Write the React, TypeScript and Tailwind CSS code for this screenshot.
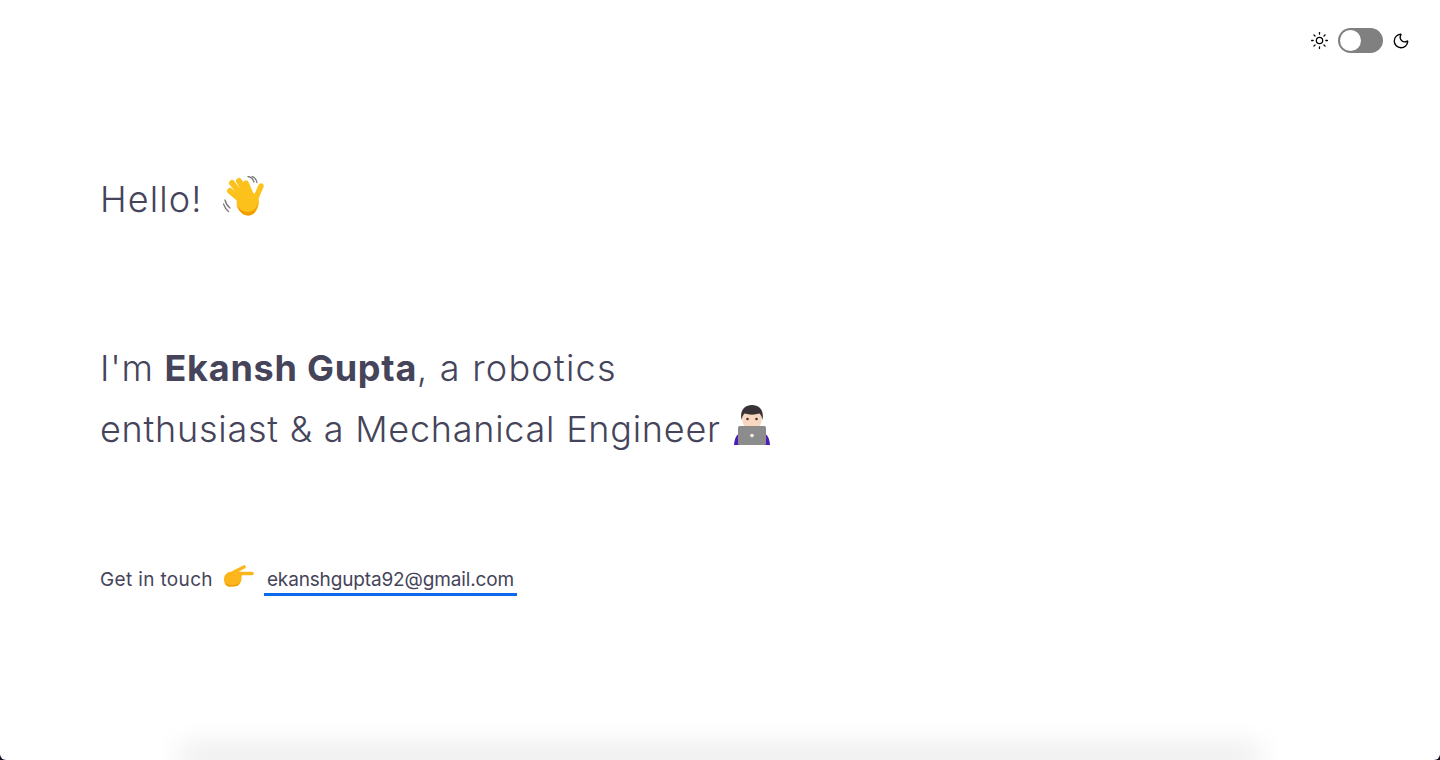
import { Moon, Sun } from "lucide-react";

function WaveEmoji() {
  return (
    <svg width="44" height="44" viewBox="0 0 44 44" fill="none">
      <path d="M2 24c.8 3.500 2.500 6 5 8M.5 28c1 3 2.500 5.500 5 7.500" stroke="#777" strokeWidth="1.300" strokeLinecap="round" />
      <path d="M25 .5c3 .5 5 2.500 6 5.500M29 .5c2.500 1 4.500 3 5 6" stroke="#777" strokeWidth="1.300" strokeLinecap="round" />
      <g stroke="#fcc21b" strokeLinecap="round">
        <path d="M7 15l12 10" strokeWidth="6" />
        <path d="M9 7l12 15" strokeWidth="6" />
        <path d="M16 5l9 15" strokeWidth="6" />
        <path d="M23 7l6 14" strokeWidth="5.500" />
        <path d="M38 10l-6 14" strokeWidth="5.500" />
      </g>
      <path d="M14 24c2-5 10-9 16-7 4 1 6 5 6 9-.3 7-4 13-10 13.500-5 .3-9-3-11-8-1-2.500-2-5-1-7.500z" fill="#fcc21b" />
      <path d="M13 28c3 5 7 8 12 8 5-.5 8-3.500 10-9-1 7-4 12-9.500 12.500-5.500.3-10-4.500-12.500-11.500z" fill="#f19d00" />
    </svg>
  );
}

function PointEmoji() {
  return (
    <svg width="32" height="26" viewBox="0 0 32 26" fill="none">
      <path d="M16 9.500h13" stroke="#fcb61b" strokeWidth="3.600" strokeLinecap="round" />
      <path d="M11 8l10-5" stroke="#fcb61b" strokeWidth="3.600" strokeLinecap="round" />
      <path d="M1 15c0-4 3-7 8-7.500 3-.3 6-.3 9 .5 1.500 1 1.500 3 .5 4.500.5 3-.5 6-2 7.500-1.500 1.800-4 2.500-7 2.500H6c-3.500 0-5-3.500-5-7.500z" fill="#fcb61b" />
      <path d="M3 19c2 2 5 2.500 8 2 3-.3 5-1.500 6-3-.5 3-3 4.500-7 4.500H6c-1.500 0-2.500-1.500-3-3.500z" fill="#ee9a0b" />
    </svg>
  );
}

function LaptopEmoji() {
  return (
    <svg width="36" height="40" viewBox="0 0 36 40" fill="none">
      <path d="M0 40c.5-6 2-10 6-12h24c4 2 5.500 6 6 12z" fill="#4a1fb8" />
      <ellipse cx="18" cy="13" rx="10" ry="12" fill="#f7d7bd" />
      <path d="M7.500 15C5.500 5 11 0 18 0s12.500 5 10.500 15c-.5-3-1.500-5-3-6.500-5 1.500-10 1.500-15 0-1.500 1.500-2.500 3.500-3 6.500z" fill="#3a3336" />
      <circle cx="13.500" cy="14" r="1.300" fill="#4a3530" />
      <circle cx="22.500" cy="14" r="1.300" fill="#4a3530" />
      <rect x="4" y="21" width="28" height="19" rx="1.500" fill="#8c8c8c" />
      <circle cx="18" cy="30.500" r="1.800" fill="#f2f2f2" />
    </svg>
  );
}

export default function App() {
  return (
    <div className="h-[760px] overflow-hidden bg-[#111122] font-['Inter',sans-serif] text-[#45445a]">
      <div className="flex h-full flex-col overflow-hidden rounded-b-[6px] bg-white">
        <header className="flex items-center justify-end gap-[9px] pr-[30px] pt-[28px]">
          <Sun size={19} strokeWidth={1.6} className="text-black" />
          <div className="flex h-[25px] w-[45px] items-center rounded-full bg-[#808080] pl-[2px]">
            <div className="h-[21px] w-[21px] rounded-full bg-white" />
          </div>
          <Moon size={18} strokeWidth={1.8} className="text-black" />
        </header>

        <main className="flex-1 pl-[100px]">
          <div className="mt-[121px] flex items-center text-[36px] font-light leading-[50px] tracking-[1.1px]">
            <span>Hello!</span>
            <span className="ml-[21px] -translate-y-[1px]">
              <WaveEmoji />
            </span>
          </div>

          <div className="mt-[114px] text-[36px] font-light leading-[61px] tracking-[.75px]">
            <p>
              I'm <b className="font-bold">Ekansh Gupta</b>
              <span className="tracking-[1.25px]">, a robotics</span>
            </p>
            <p className="flex items-center">
              enthusiast &amp; a Mechanical Engineer
              <span className="ml-[13px] -translate-y-[5px]">
                <LaptopEmoji />
              </span>
            </p>
          </div>

          <div className="mt-[103px] flex items-center text-[19px] leading-[30px]">
            <span className="tracking-[.35px]">Get in touch</span>
            <span className="ml-[10px] -translate-y-[3px]">
              <PointEmoji />
            </span>
            <a className="ml-[9px] border-b-[3px] border-[#0b69ea] px-[3px] pt-[4px] leading-[26px] tracking-[-.15px]">ekanshgupta92@gmail.com</a>
          </div>
        </main>

        <div className="mx-[180px] h-[10px] translate-y-[10px] shadow-[0_-8px_30px_rgba(0,0,0,0.2)]" />
      </div>
    </div>
  );
}
